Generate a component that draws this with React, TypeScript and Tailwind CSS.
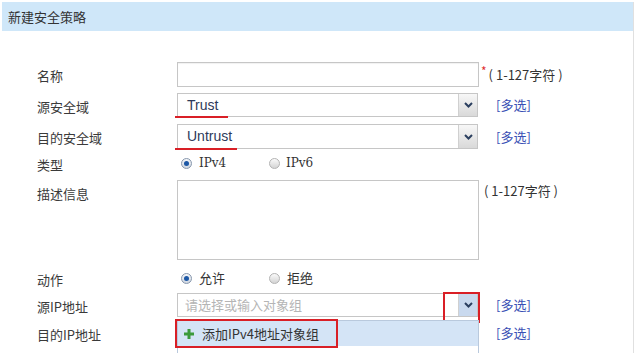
import React from 'react'

const font = { fontFamily: '"Noto Sans CJK SC", "Noto Sans", sans-serif' }

function Chevron({ color = '#2b3f5f' }: { color?: string }) {
  return (
    <svg width="9" height="6" viewBox="0 0 9 6">
      <path d="M1 1 L4.5 4.5 L8 1" fill="none" stroke={color} strokeWidth="2" />
    </svg>
  )
}

function DropButton({ active = false }: { active?: boolean }) {
  return (
    <div
      className={
        'w-[19px] h-full flex items-center justify-center border-l border-[#d0d0d0] ' +
        (active ? 'bg-[#c9d9ee]' : 'bg-gradient-to-b from-[#f7f7f7] to-[#d9d9d9]')
      }
    >
      <Chevron />
    </div>
  )
}

function Radio({ checked }: { checked?: boolean }) {
  return checked ? (
    <span className="w-[11px] h-[11px] rounded-full border border-[#8797ad] bg-gradient-to-b from-[#f4f6f9] to-[#cfd6e0] flex items-center justify-center">
      <span className="w-[5px] h-[5px] rounded-full bg-[#1c57a5]" />
    </span>
  ) : (
    <span className="w-[11px] h-[11px] rounded-full border border-[#b3b3b3] bg-gradient-to-b from-[#fafafa] to-[#d4d4d4]" />
  )
}

function Label({ children, top = false }: { children: React.ReactNode; top?: boolean }) {
  return (
    <div className={'text-[13px] text-[#3a3a3a] ' + (top ? 'pt-[4px]' : 'pt-[3px] self-center')}>
      {children}
    </div>
  )
}

function Multi() {
  return <div className="pl-[17px] text-[13px] text-[#3a50b5] self-center">[多选]</div>
}

const row = 'grid grid-cols-[140px_302px_auto]'

export default function App() {
  return (
    <div className="w-[640px] h-[353px] overflow-hidden bg-white pt-[2px] pl-[2px]" style={font}>
      <div className="w-[632px] h-[400px] border-r border-[#e0e0e0]">
        <div className="h-[29px] bg-[#cfe7f9] flex items-center pl-[6px] text-[13px] text-[#333]">
          新建安全策略
        </div>

        <div className="pt-[31px] pl-[35px]">
          {/* 名称 */}
          <div className={row + ' h-[25px]'}>
            <Label>名称</Label>
            <div className="border border-[#c6c6c6] bg-white shadow-[inset_0_1px_1px_rgba(0,0,0,0.06)]" />
            <div className="flex items-start text-[13px] text-[#333] pt-[3px]">
              <span className="text-[#e03030] ml-[2px] text-[12px] leading-none">*</span>
              <span className="ml-[2px] whitespace-pre">( 1-127字符 )</span>
            </div>
          </div>

          {/* 源安全域 */}
          <div className={row + ' h-[24px] mt-[6px]'}>
            <Label>源安全域</Label>
            <div className="relative border border-[#c6c6c6] flex mr-[1px]">
              <div className="flex-1 flex items-center pl-[9px] text-[14px] text-[#2d3a5a]" style={{ fontFamily: '"Liberation Sans", sans-serif' }}>
                Trust
              </div>
              <DropButton />
              <div className="absolute left-[-3px] bottom-[-2px] w-[53px] h-[2px] bg-[#d91f26]" />
            </div>
            <Multi />
          </div>

          {/* 目的安全域 */}
          <div className={row + ' h-[25px] mt-[7px]'}>
            <Label>目的安全域</Label>
            <div className="relative border border-[#c6c6c6] flex mr-[1px]">
              <div className="flex-1 flex items-center pl-[9px] text-[14px] text-[#2d3a5a]" style={{ fontFamily: '"Liberation Sans", sans-serif' }}>
                Untrust
              </div>
              <DropButton />
              <div className="absolute left-[-3px] bottom-[-2px] w-[62px] h-[2px] bg-[#d91f26]" />
            </div>
            <Multi />
          </div>

          {/* 类型 */}
          <div className={row + ' h-[24px] mt-[2px]'}>
            <Label>类型</Label>
            <div className="flex items-center pl-[4px] text-[13px] text-[#333]">
              <div className="w-[88px] flex items-center gap-[7px]">
                <Radio checked />
                <span style={{ fontFamily: '"DejaVu Serif", serif' }} className="text-[12px]">IPv4</span>
              </div>
              <div className="flex items-center gap-[6px]">
                <Radio />
                <span style={{ fontFamily: '"DejaVu Serif", serif' }} className="text-[12px]">IPv6</span>
              </div>
            </div>
            <div />
          </div>

          {/* 描述信息 */}
          <div className={row + ' h-[80px] mt-[5px]'}>
            <Label top>描述信息</Label>
            <div className="border border-[#c6c6c6] bg-white" />
            <div className="pl-[5px] pt-[1px] text-[13px] text-[#333] whitespace-pre">( 1-127字符 )</div>
          </div>

          {/* 动作 */}
          <div className={row + ' h-[24px] mt-[6px]'}>
            <Label>动作</Label>
            <div className="flex items-center pl-[4px] text-[13px] text-[#333]">
              <div className="w-[88px] flex items-center gap-[7px]">
                <Radio checked />
                <span>允许</span>
              </div>
              <div className="flex items-center gap-[7px]">
                <Radio />
                <span>拒绝</span>
              </div>
            </div>
            <div />
          </div>

          {/* 源IP地址 */}
          <div className={row + ' h-[24px] mt-[3px] relative z-10'}>
            <Label>源IP地址</Label>
            <div className="relative border border-[#c6c6c6] flex mr-[1px] bg-white">
              <div className="flex-1 flex items-center pl-[7px] text-[13px] text-[#b5b5b5]">请选择或输入对象组</div>
              <DropButton active />
              <div className="absolute left-[265px] right-[-3px] top-[-2px] bottom-[-7px] border-2 border-[#d91f26]" />
              {/* dropdown list */}
              <div className="absolute left-[-1px] top-[26px] w-[302px] h-[60px] bg-white border border-[#b9c9dd]">
                <div className="h-[25px] bg-[#d4e4f6] flex items-center pl-[5px] text-[13px] text-[#333]">
                  <svg width="12" height="12" viewBox="0 0 12 12" className="mr-[7px]">
                    <path d="M6 1 V11 M1 6 H11" stroke="#3b9a3b" strokeWidth="3" />
                  </svg>
                  添加IPv4地址对象组
                </div>
                <div className="absolute left-[-3px] top-[-2px] w-[163px] h-[29px] border-2 border-[#d91f26]" />
              </div>
            </div>
            <Multi />
          </div>

          {/* 目的IP地址 */}
          <div className={row + ' h-[26px] mt-[3px]'}>
            <Label>目的IP地址</Label>
            <div className="border border-[#c6c6c6]" />
            <Multi />
          </div>
        </div>
      </div>
    </div>
  )
}
